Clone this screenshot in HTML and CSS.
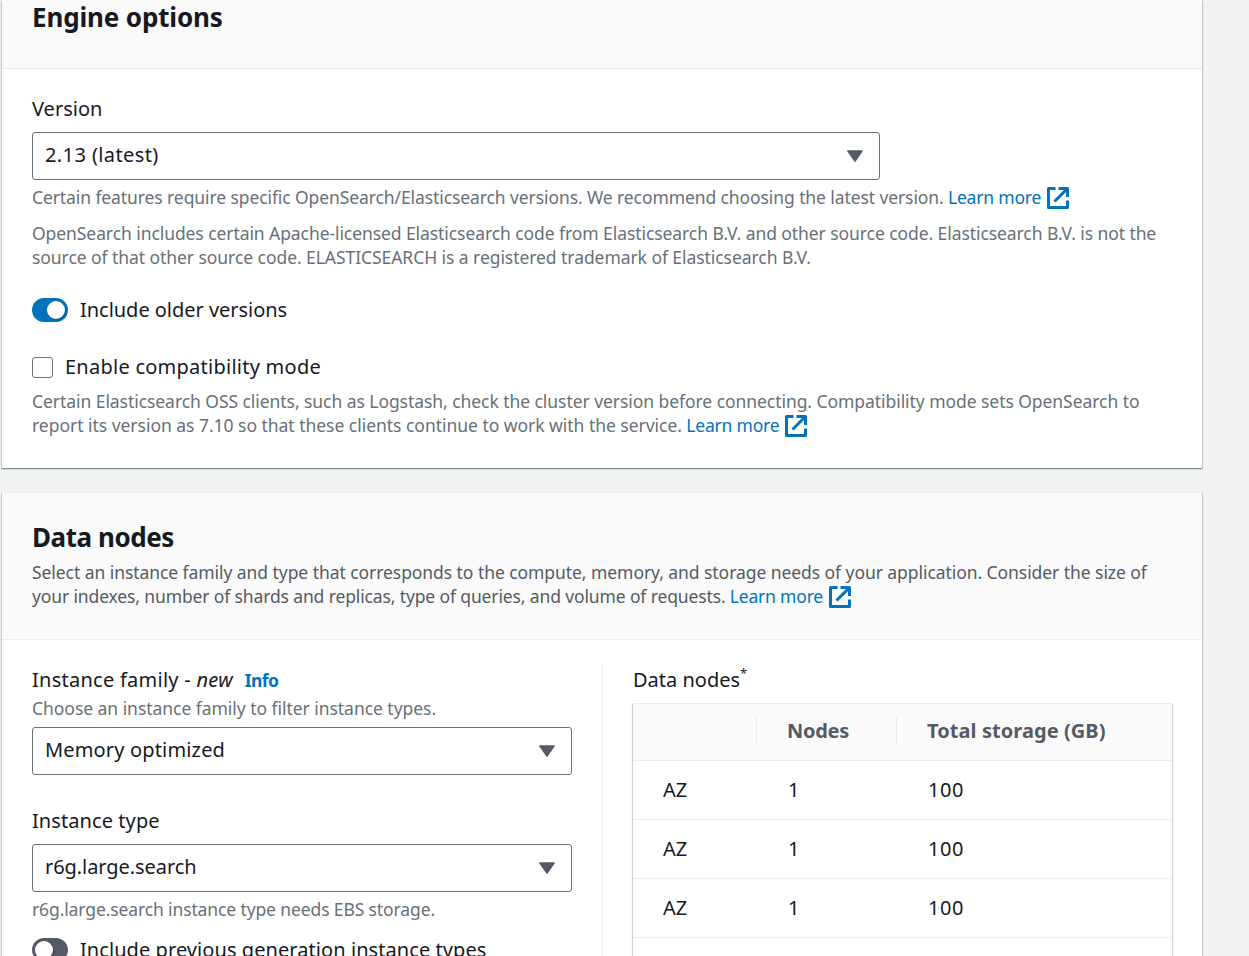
FILE: index.html
```
<!DOCTYPE html>
<html lang="en">
<head>
<meta charset="utf-8">
<title>Create domain</title>
<link rel="stylesheet" href="styles.css">
</head>
<body>
<svg class="defs" width="0" height="0">
  <symbol id="external" viewBox="0 0 22 22">
    <path d="M8.5 1.5H1.5V20.5H20.5V13.5M11.5 1.5H20.5V10M20 2L7.5 14.5" fill="none" stroke="#0073bb" stroke-width="3" stroke-linejoin="round"/>
  </symbol>
  <symbol id="caret" viewBox="0 0 16 12">
    <path d="M1 1H15L8 11Z" fill="#545b64" stroke="#545b64" stroke-width="1.6" stroke-linejoin="round"/>
  </symbol>
</svg>
<main class="page">
  <section class="card">
    <header class="card-header engine-header"><h2>Engine options</h2></header>
    <div class="card-body">
      <div class="label">Version</div>
      <div class="select select-wide"><span class="t-ver">2.13 (latest)</span><svg class="caret"><use href="#caret"/></svg></div>
      <p class="hint"><span class="l1">Certain features require specific OpenSearch/Elasticsearch versions. We recommend choosing the latest version.</span> <a>Learn more <svg class="ext"><use href="#external"/></svg></a></p>
      <p class="hint legal"><span class="l2">OpenSearch includes certain Apache-licensed Elasticsearch code from Elasticsearch B.V. and other source code. Elasticsearch B.V. is not the</span><br><span class="l3">source of that other source code. ELASTICSEARCH is a registered trademark of Elasticsearch B.V.</span></p>
      <div class="toggle-row"><span class="toggle on"></span><span class="t-older">Include older versions</span></div>
      <div class="check-row"><span class="checkbox"></span><span class="t-compat">Enable compatibility mode</span></div>
      <p class="hint compat-hint"><span class="l4">Certain Elasticsearch OSS clients, such as Logstash, check the cluster version before connecting. Compatibility mode sets OpenSearch to</span><br><span class="l5">report its version as 7.10 so that these clients continue to work with the service.</span> <a>Learn more <svg class="ext"><use href="#external"/></svg></a></p>
    </div>
  </section>

  <section class="card nodes-card">
    <header class="card-header nodes-header">
      <h2 class="t-nodes">Data nodes</h2>
      <p class="hint desc"><span class="l6">Select an instance family and type that corresponds to the compute, memory, and storage needs of your application. Consider the size of</span><br><span class="l7">your indexes, number of shards and replicas, type of queries, and volume of requests.</span> <a>Learn more <svg class="ext"><use href="#external"/></svg></a></p>
    </header>
    <div class="columns">
      <div class="col">
        <div class="label family-label"><span class="t-family">Instance family - <em>new</em></span><a class="info">Info</a></div>
        <p class="hint family-hint"><span class="l8">Choose an instance family to filter instance types.</span></p>
        <div class="select"><span class="t-mem">Memory optimized</span><svg class="caret"><use href="#caret"/></svg></div>
        <div class="label type-label">Instance type</div>
        <div class="select"><span class="t-r6g">r6g.large.search</span><svg class="caret"><use href="#caret"/></svg></div>
        <p class="hint"><span class="l9">r6g.large.search instance type needs EBS storage.</span></p>
        <div class="toggle-row prev-row"><span class="toggle"></span><span class="t-prev">Include previous generation instance types</span></div>
      </div>
      <div class="col col-right">
        <div class="label nodes-label">Data nodes<span class="star">*</span></div>
        <div class="table">
          <div class="row head"><span></span><span class="cell-nodes">Nodes</span><span class="cell-total">Total storage (GB)</span></div>
          <div class="row"><span>AZ</span><span>1</span><span>100</span></div>
          <div class="row"><span>AZ</span><span>1</span><span>100</span></div>
          <div class="row"><span>AZ</span><span>1</span><span>100</span></div>
        </div>
      </div>
    </div>
  </section>
</main>
</body>
</html>
```
FILE: styles.css
```
* { box-sizing: border-box; }
html { overflow: hidden; }
body {
  margin: 0;
  height: 956px;
  overflow: hidden;
  background: #f2f3f3;
  color: #16191f;
  font: 20px/30px "Noto Sans", "Open Sans", sans-serif;
  letter-spacing: 0;
  white-space: nowrap;
}
.defs { position: absolute; }
h2, p { margin: 0; }
.page { width: 1202px; height: 956px; padding-left: 2px; display: flex; flex-direction: column; gap: 24px; }
.card {
  flex: none;
  background: #fff;
  box-shadow: 0 1px 1px 0 rgba(0, 28, 36, .3), 1px 1px 1px 0 rgba(0, 28, 36, .15), -1px 1px 1px 0 rgba(0, 28, 36, .15);
}
.nodes-card { height: 464px; }
.card-header { padding: 0 30px; background: #fafafa; border-bottom: 1px solid #eaeded; }
.engine-header { height: 69px; }
.nodes-header { height: 148px; border-top: 1px solid #eaeded; padding-top: 27px; }
h2 { font-size: 26px; line-height: 34px; font-weight: 700; letter-spacing: -0.15px; }
h2.t-nodes { letter-spacing: -0.45px; }
.card-body { height: 399px; padding: 25px 30px 0; }
.label { height: 30px; margin-bottom: 8px; }
.select {
  height: 48px; border: 1px solid #687078; border-radius: 3px;
  padding: 0 16px 3px 12px; display: flex; align-items: center; justify-content: space-between;
}
.select-wide { width: 848px; }
.caret { width: 16px; height: 12px; margin-top: 2px; }
.hint { font-size: 17.5px; line-height: 24px; color: #687078; margin-top: 5px; letter-spacing: -0.2px; }
.legal { margin-top: 12px; }
.hint a, .info { color: #0073bb; }
.ext { width: 22px; height: 22px; vertical-align: -5px; margin-left: 1.5px; }
.toggle-row { display: flex; align-items: center; gap: 12px; height: 30px; margin-top: 26px; }
.toggle { width: 36px; height: 24px; border-radius: 12px; background: #545b64; padding: 3px; display: flex; }
.toggle::before { content: ""; width: 18px; height: 18px; border-radius: 50%; background: #fff; box-shadow: 1px 1px 1px rgba(0, 0, 0, .25); }
.toggle.on { background: #0073bb; justify-content: flex-end; }
.check-row { display: flex; align-items: center; gap: 12px; height: 30px; margin-top: 27px; }
.checkbox { width: 21px; height: 21px; border: 1.5px solid #687078; border-radius: 3px; }
.compat-hint { margin-top: 7px; }
.desc { margin-top: 6px; color: #545b64; }
.columns { display: flex; padding: 24px 30px 0; }
.col { width: 540px; }
.col-right { width: 570px; margin-left: 30px; padding-left: 30px; border-left: 1px solid #eaeded; height: 292px; }
.family-label { display: flex; gap: 12px; margin: 1px 0 0; }
.info { font-size: 17.5px; font-weight: 700; line-height: 30px; letter-spacing: -0.6px; }
.family-hint { margin: 1px 0 7px; }
.type-label { margin-top: 31px; }
.prev-row { margin-top: 14px; }
.nodes-label { margin-top: 1px; }
.star { font-size: 13px; vertical-align: 9px; line-height: 0; }
.table { box-shadow: 0 1px 1px 0 rgba(0, 28, 36, .3), 1px 1px 1px 0 rgba(0, 28, 36, .15), -1px 1px 1px 0 rgba(0, 28, 36, .15); border-top: 1px solid #eaeded; height: 253px; }
.row { display: grid; grid-template-columns: 123px 140px 1fr; height: 59px; align-items: center; border-bottom: 1px solid #eaeded; }
.row span { padding-left: 30px; }
.row span + span { padding-left: 32px; letter-spacing: 0.5px; }
.row.head { height: 57px; background: #fafafa; color: #545b64; font-weight: 700; padding-bottom: 2px; }
.row.head span + span { border-left: 1px solid #eaeded; padding-left: 30px; }
.row.head .cell-nodes { letter-spacing: -0.3px; }
.row.head .cell-total { letter-spacing: 0.07px; }

/* Tracking per line of copy */
.l1 { letter-spacing: -0.095px; }
.l2 { letter-spacing: -0.077px; }
.l3 { letter-spacing: -0.062px; }
.l4 { letter-spacing: -0.058px; }
.l5 { letter-spacing: -0.028px; }
.l6 { letter-spacing: -0.063px; }
.l7 { letter-spacing: -0.13px; }
.l8 { letter-spacing: -0.04px; }
.l9 { letter-spacing: -0.12px; }
.t-ver { letter-spacing: 0.4px; }
.t-older { letter-spacing: -0.03px; }
.t-compat { letter-spacing: 0.25px; }
.t-family { letter-spacing: 0.26px; }
.t-mem { letter-spacing: 0.16px; }
.type-label { letter-spacing: 0.08px; }
.t-r6g { letter-spacing: -0.07px; }
.t-prev { letter-spacing: 0.07px; }
```
